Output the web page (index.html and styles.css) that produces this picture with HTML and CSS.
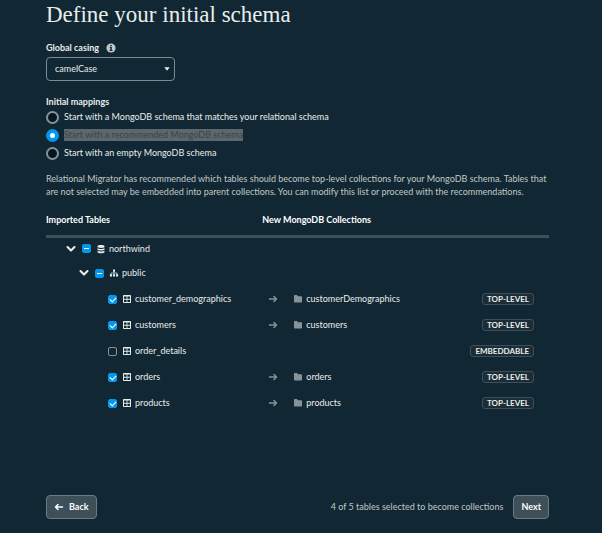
FILE: index.html
```html
<!DOCTYPE html>
<html lang="en">
<head>
<meta charset="utf-8">
<meta name="viewport" content="width=device-width, initial-scale=1">
<title>Define your initial schema</title>
<link rel="stylesheet" href="styles.css">
</head>
<body>
<svg class="sprite" aria-hidden="true">
  <symbol id="chevron" viewBox="0 0 10 10"><path d="M1.5 3 5 6.500 8.500 3" fill="none" stroke="currentColor" stroke-width="2.100" stroke-linecap="round" stroke-linejoin="round"/></symbol>
  <symbol id="database" viewBox="0 0 10 10"><path d="M1.500 2.200C1.500.6 8.500.6 8.500 2.200V3C8.500 4.200 1.500 4.200 1.500 3ZM1.500 4.200C3 5.200 7 5.200 8.500 4.200V5.700C7.500 6.800 2.500 6.800 1.500 5.700ZM1.500 6.800C3 7.800 7 7.800 8.500 6.800V8C8.500 9.800 1.500 9.800 1.500 8Z" fill="currentColor"/></symbol>
  <symbol id="schema" viewBox="0 0 10 10"><path d="M4 1.500h2v2.200H4zM.9 6.300h2.100v2.200H.9zM3.950 6.300h2.100v2.200h-2.100zM7 6.300h2.100v2.200H7z" fill="currentColor"/><path d="M5 3v4M1.900 7V5h6.200v2" fill="none" stroke="currentColor" stroke-width=".7"/></symbol>
  <symbol id="table" viewBox="0 0 10 10"><path fill="currentColor" fill-rule="evenodd" d="M1.800 1h6.400a.8.800 0 0 1 .8.800v6.400a.8.800 0 0 1-.8.800H1.800a.8.800 0 0 1-.8-.8V1.800a.8.800 0 0 1 .8-.8ZM2 2.600h2.600v2.200H2Zm3.400 0H8v2.200H5.400ZM2 5.700h2.600v2.300H2Zm3.400 0H8v2.300H5.400Z"/></symbol>
  <symbol id="arrow" viewBox="0 0 10 10"><path d="M1.500 5h7M6 2.500 8.500 5 6 7.500" fill="none" stroke="currentColor" stroke-width="1.500" stroke-linecap="round" stroke-linejoin="round"/></symbol>
  <symbol id="folder" viewBox="0 0 10 10"><path d="M1 1.700Q1 1 1.700 1H4l.9 1.200h3.400q.7 0 .7.700V7.800q0 .7-.7.700H1.700Q1 8.500 1 7.800Z" fill="currentColor"/></symbol>
</svg>

<main class="page">
  <h1>Define your initial schema</h1>

  <div class="field">
    <div class="field-label">
      <label for="casing">Global casing</label>
      <svg class="info" viewBox="0 0 10 10" aria-hidden="true"><circle cx="5" cy="5" r="4.600" fill="#c1c7c6"/><path d="M4.200 2h1.600v1.300H4.200zM3.700 4.100h2.100v2.900h.7V8H3.600V7h.7V5h-.6z" fill="#112733"/></svg>
    </div>
    <div class="select">
      <select id="casing"><option>camelCase</option><option>snake_case</option></select>
      <svg class="caret" viewBox="0 0 6 4" aria-hidden="true"><path d="M.3.300h5.400L3 3.700z" fill="#e8edeb"/></svg>
    </div>
  </div>

  <fieldset class="mappings">
    <legend>Initial mappings</legend>
    <label class="choice"><input type="radio" name="mapping"><span>Start with a MongoDB schema that matches your relational schema</span></label>
    <label class="choice"><input type="radio" name="mapping" checked><span class="marked">Start with a recommended MongoDB schema</span></label>
    <label class="choice"><input type="radio" name="mapping"><span>Start with an empty MongoDB schema</span></label>
  </fieldset>

  <p class="note">Relational Migrator has recommended which tables should become top-level collections for your MongoDB schema. Tables that are not selected may be embedded into parent collections. You can modify this list or proceed with the recommendations.</p>

  <table class="tree">
    <thead>
      <tr><th class="col-source">Imported Tables</th><th>New MongoDB Collections</th><th class="col-kind"></th></tr>
    </thead>
    <tbody>
      <tr class="root"><td colspan="3"><label class="node level-0"><svg class="icon"><use href="#chevron"/></svg><input type="checkbox" class="partial"><svg class="icon"><use href="#database"/></svg><span>northwind</span></label></td></tr>
      <tr><td colspan="3"><label class="node level-1"><svg class="icon"><use href="#chevron"/></svg><input type="checkbox" class="partial"><svg class="icon"><use href="#schema"/></svg><span>public</span></label></td></tr>
      <tr><td><label class="node level-2"><input type="checkbox" checked><svg class="icon"><use href="#table"/></svg><span>customer_demographics</span></label></td><td><div class="target"><svg class="icon"><use href="#arrow"/></svg><svg class="icon"><use href="#folder"/></svg><span>customerDemographics</span></div></td><td class="kind"><span class="badge">TOP-LEVEL</span></td></tr>
      <tr><td><label class="node level-2"><input type="checkbox" checked><svg class="icon"><use href="#table"/></svg><span>customers</span></label></td><td><div class="target"><svg class="icon"><use href="#arrow"/></svg><svg class="icon"><use href="#folder"/></svg><span>customers</span></div></td><td class="kind"><span class="badge">TOP-LEVEL</span></td></tr>
      <tr><td><label class="node level-2"><input type="checkbox"><svg class="icon"><use href="#table"/></svg><span>order_details</span></label></td><td></td><td class="kind"><span class="badge">EMBEDDABLE</span></td></tr>
      <tr><td><label class="node level-2"><input type="checkbox" checked><svg class="icon"><use href="#table"/></svg><span>orders</span></label></td><td><div class="target"><svg class="icon"><use href="#arrow"/></svg><svg class="icon"><use href="#folder"/></svg><span>orders</span></div></td><td class="kind"><span class="badge">TOP-LEVEL</span></td></tr>
      <tr><td><label class="node level-2"><input type="checkbox" checked><svg class="icon"><use href="#table"/></svg><span>products</span></label></td><td><div class="target"><svg class="icon"><use href="#arrow"/></svg><svg class="icon"><use href="#folder"/></svg><span>products</span></div></td><td class="kind"><span class="badge">TOP-LEVEL</span></td></tr>
    </tbody>
  </table>

  <footer class="actions">
    <button type="button"><svg class="icon back"><use href="#arrow"/></svg>Back</button>
    <span class="summary">4 of 5 tables selected to become collections</span>
    <button type="button">Next</button>
  </footer>
</main>
</body>
</html>
```
FILE: styles.css
```css
* { box-sizing: border-box; }

body {
  margin: 0;
  background: #112733;
  color: #e8edeb;
  font: 9px/12px Lato, "Liberation Sans", sans-serif;
}

.sprite { display: none; }

.page {
  display: flex;
  flex-direction: column;
  min-height: 100vh;
  padding: 0 53px 14px 46px;
}

h1 {
  margin: 0;
  font: 23px/30px "Liberation Serif", serif;
}

.field { margin-top: 12px; }

.field-label {
  display: flex;
  align-items: center;
  gap: 7px;
  font-weight: 700;
}

.info { width: 10px; height: 10px; }

.select {
  position: relative;
  width: 129px;
  margin-top: 3px;
}

.select select {
  display: block;
  appearance: none;
  width: 100%;
  height: 24px;
  padding: 0 8px;
  border: 1px solid #7d8a90;
  border-radius: 4px;
  background: #112733;
  color: inherit;
  font: inherit;
}

.caret {
  position: absolute;
  right: 5px;
  top: 10px;
  width: 6px;
  height: 4px;
  pointer-events: none;
}

.mappings {
  margin: 15px 0 0;
  padding: 0;
  border: 0;
}

.mappings legend { padding: 0; font-weight: 700; }

.choice {
  display: flex;
  align-items: center;
  gap: 5px;
  height: 18px;
}

input { appearance: none; flex: none; margin: 0; }

input[type="radio"] {
  width: 13px;
  height: 13px;
  border: 2px solid #889397;
  border-radius: 50%;
  background: #061621;
}

input[type="radio"]:checked {
  border: 4px solid #0498ec;
  background: #fff;
}

.marked { background: #5c686d; color: #38444a; }

.note {
  margin: 10px 0 0;
  color: #c1c7c6;
  line-height: 13px;
}

.tree {
  width: 100%;
  margin-top: 12px;
  border-collapse: collapse;
  table-layout: fixed;
}

.tree th {
  height: 26px;
  padding: 0 0 4px;
  border-bottom: 3px solid #3d4f58;
  color: #fff;
  text-align: left;
}

.col-source { width: 43%; }
.col-kind { width: 17%; }

.tree td { height: 26px; padding: 0; }
.tree .root td { height: 24px; }

.node, .target { display: flex; align-items: center; gap: 5px; }
.level-0 { padding-left: 20px; }
.level-1 { padding-left: 33px; }
.level-2 { padding-left: 62px; }
.node .icon { margin-right: -2px; }
.node .icon:first-child { margin-right: 1px; }

.icon { width: 10px; height: 10px; flex: none; }

input[type="checkbox"] {
  width: 9px;
  height: 9px;
  border: 1px solid #889397;
  border-radius: 2px;
}

input[type="checkbox"]:checked,
.node .partial {
  border-color: #0498ec;
  background: #0498ec;
}

input[type="checkbox"]::before { content: ""; display: block; }

input[type="checkbox"]:checked::before {
  width: 5px;
  height: 3px;
  margin: 1px;
  border: solid #fff;
  border-width: 0 0 1px 1px;
  transform: rotate(-45deg);
}

.node .partial::before {
  width: 5px;
  height: 1px;
  margin: 3px 1px;
  background: #fff;
}

.target { gap: 3px; padding-left: 6px; }
.target .icon { color: #889397; }
.target .icon:first-child { margin-right: 12px; }

.tree .kind { padding-right: 15px; text-align: right; }

.badge {
  display: inline-block;
  padding: 0 4px;
  border: 1px solid #3d4f58;
  border-radius: 3px;
  background: #1c2d38;
  font-size: 8px;
  line-height: 10px;
  font-weight: 700;
}

.actions {
  display: flex;
  align-items: center;
  gap: 10px;
  margin-top: auto;
}

.actions button {
  display: flex;
  align-items: center;
  gap: 5px;
  height: 24px;
  padding: 0 7px;
  border: 1px solid #6c7a81;
  border-radius: 4px;
  background: #3d4f58;
  color: #fff;
  font: inherit;
  font-weight: 700;
}

.back { transform: scaleX(-1); }
.summary { margin-left: auto; color: #c1c7c6; }
```
